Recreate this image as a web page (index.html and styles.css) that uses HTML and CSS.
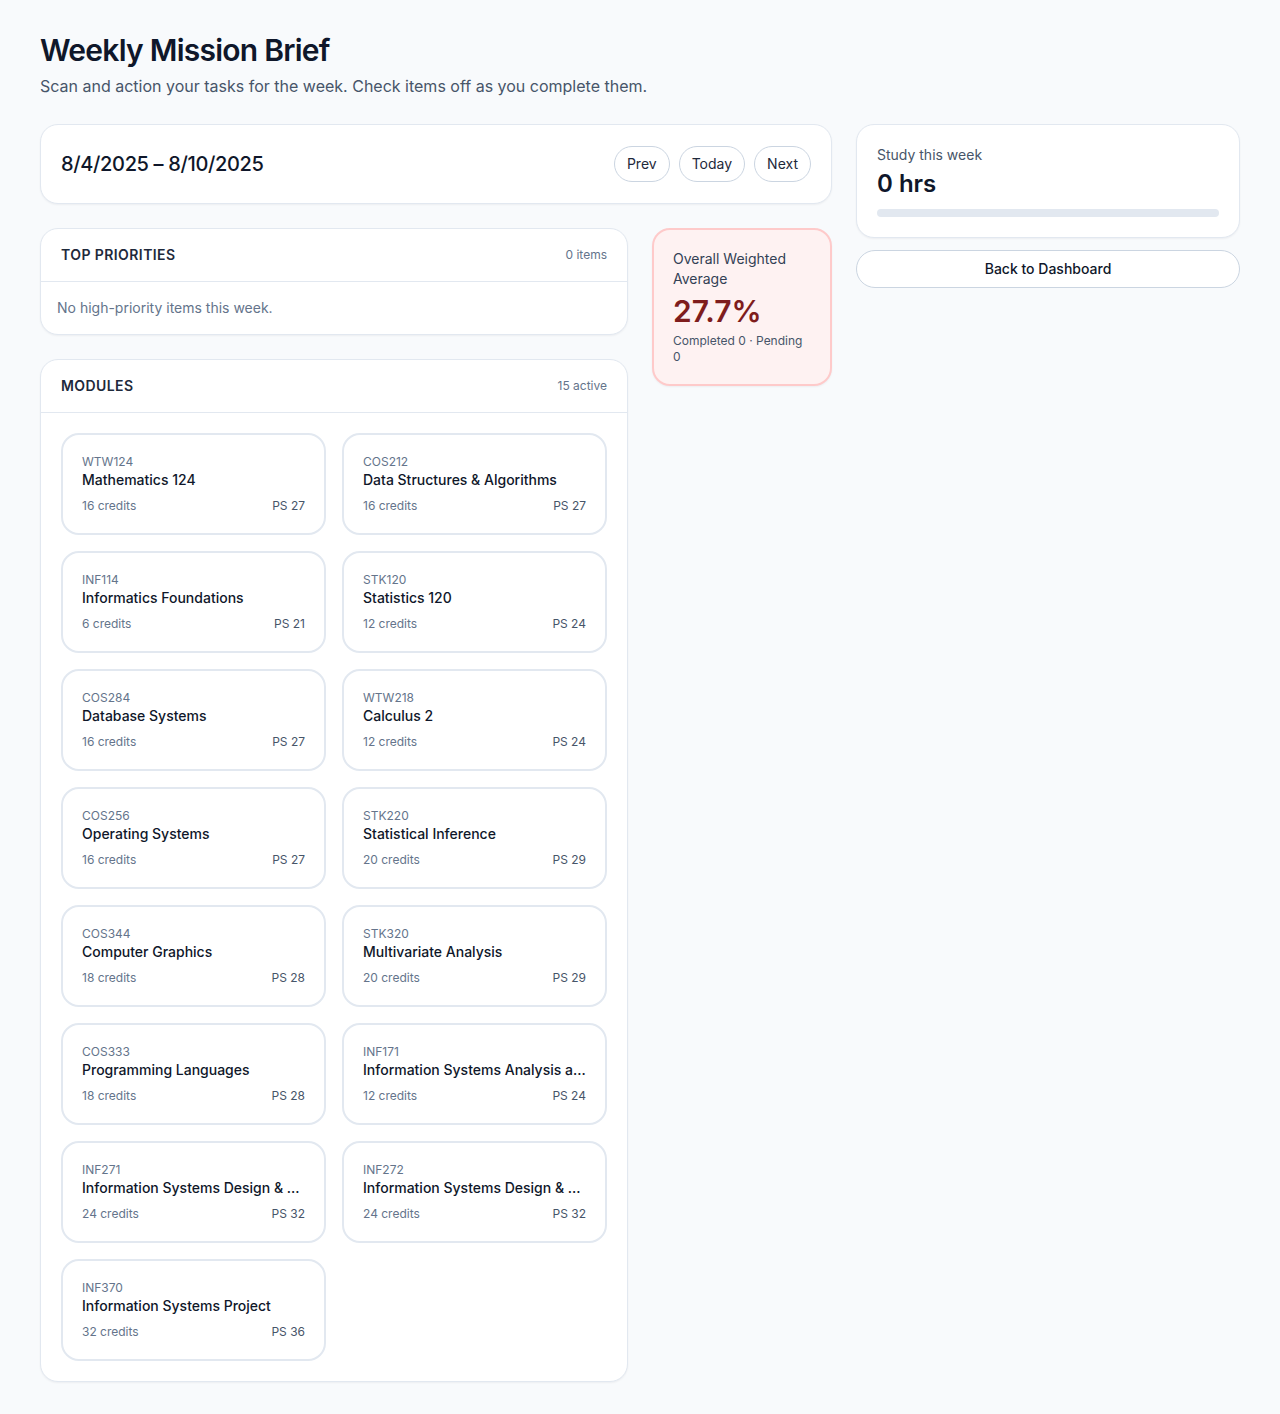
FILE: index.html
```html
<!DOCTYPE html>
<html lang="en">
<head>
<meta charset="utf-8">
<title>Weekly Mission Brief</title>
<link rel="stylesheet" href="styles.css">
</head>
<body>
<main class="page">
  <header class="page-head">
    <h1 class="page-title">Weekly Mission Brief</h1>
    <p class="page-sub">Scan and action your tasks for the week. Check items off as you complete them.</p>
  </header>

  <div class="layout">
    <div class="main-col">
      <section class="card week-card">
        <h2 class="week-range">8/4/2025 – 8/10/2025</h2>
        <div class="week-nav">
          <button class="pill-btn">Prev</button>
          <button class="pill-btn">Today</button>
          <button class="pill-btn">Next</button>
        </div>
      </section>

      <div class="content-grid">
        <div class="stack">
          <section class="card panel">
            <div class="panel-head">
              <h3 class="panel-title">Top Priorities</h3>
              <span class="panel-meta">0 items</span>
            </div>
            <p class="empty">No high-priority items this week.</p>
          </section>

          <section class="card panel">
            <div class="panel-head">
              <h3 class="panel-title">Modules</h3>
              <span class="panel-meta">15 active</span>
            </div>
            <div class="module-grid">
              <div class="module"><div class="m-code">WTW124</div><div class="m-name">Mathematics 124</div><div class="m-foot"><span>16 credits</span><span class="m-ps">PS 27</span></div></div>
              <div class="module"><div class="m-code">COS212</div><div class="m-name">Data Structures &amp; Algorithms</div><div class="m-foot"><span>16 credits</span><span class="m-ps">PS 27</span></div></div>
              <div class="module"><div class="m-code">INF114</div><div class="m-name">Informatics Foundations</div><div class="m-foot"><span>6 credits</span><span class="m-ps">PS 21</span></div></div>
              <div class="module"><div class="m-code">STK120</div><div class="m-name">Statistics 120</div><div class="m-foot"><span>12 credits</span><span class="m-ps">PS 24</span></div></div>
              <div class="module"><div class="m-code">COS284</div><div class="m-name">Database Systems</div><div class="m-foot"><span>16 credits</span><span class="m-ps">PS 27</span></div></div>
              <div class="module"><div class="m-code">WTW218</div><div class="m-name">Calculus 2</div><div class="m-foot"><span>12 credits</span><span class="m-ps">PS 24</span></div></div>
              <div class="module"><div class="m-code">COS256</div><div class="m-name">Operating Systems</div><div class="m-foot"><span>16 credits</span><span class="m-ps">PS 27</span></div></div>
              <div class="module"><div class="m-code">STK220</div><div class="m-name">Statistical Inference</div><div class="m-foot"><span>20 credits</span><span class="m-ps">PS 29</span></div></div>
              <div class="module"><div class="m-code">COS344</div><div class="m-name">Computer Graphics</div><div class="m-foot"><span>18 credits</span><span class="m-ps">PS 28</span></div></div>
              <div class="module"><div class="m-code">STK320</div><div class="m-name">Multivariate Analysis</div><div class="m-foot"><span>20 credits</span><span class="m-ps">PS 29</span></div></div>
              <div class="module"><div class="m-code">COS333</div><div class="m-name">Programming Languages</div><div class="m-foot"><span>18 credits</span><span class="m-ps">PS 28</span></div></div>
              <div class="module"><div class="m-code">INF171</div><div class="m-name">Information Systems Analysis and Design</div><div class="m-foot"><span>12 credits</span><span class="m-ps">PS 24</span></div></div>
              <div class="module"><div class="m-code">INF271</div><div class="m-name">Information Systems Design &amp; Development</div><div class="m-foot"><span>24 credits</span><span class="m-ps">PS 32</span></div></div>
              <div class="module"><div class="m-code">INF272</div><div class="m-name">Information Systems Design &amp; Development</div><div class="m-foot"><span>24 credits</span><span class="m-ps">PS 32</span></div></div>
              <div class="module"><div class="m-code">INF370</div><div class="m-name">Information Systems Project</div><div class="m-foot"><span>32 credits</span><span class="m-ps">PS 36</span></div></div>
            </div>
          </section>
        </div>

        <aside class="side-stats">
          <div class="avg-card">
            <div class="avg-label">Overall Weighted Average</div>
            <div class="avg-value">27.7%</div>
            <div class="avg-meta">Completed 0 · Pending 0</div>
          </div>
        </aside>
      </div>
    </div>

    <aside class="side-col">
      <section class="card study-card">
        <div class="study-label">Study this week</div>
        <div class="study-value">0 hrs</div>
        <div class="bar"><div class="bar-fill" style="width:0%"></div></div>
      </section>
      <button class="back-btn">Back to Dashboard</button>
    </aside>
  </div>
</main>
</body>
</html>
```

FILE: styles.css
```css
* { box-sizing: border-box; }

html, body {
  margin: 0;
  padding: 0;
  background: #f8fafc;
}

body {
  font-family: Inter, "Noto Sans", "Liberation Sans", sans-serif;
  color: #0f172a;
}

.page {
  padding: 32px 40px 32px;
}

.page-head {
  margin-bottom: 26px;
}

.page-title {
  margin: 0;
  font-size: 30px;
  line-height: 36px;
  font-weight: 600;
  letter-spacing: -0.025em;
  color: #0f172a;
}

.page-sub {
  margin: 6px 0 0;
  font-size: 16px;
  line-height: 24px;
  color: #475569;
}

.layout {
  display: grid;
  grid-template-columns: 1fr 384px;
  gap: 24px;
  align-items: start;
}

.main-col {
  display: flex;
  flex-direction: column;
  gap: 24px;
}

.card {
  background: #ffffff;
  border: 1px solid #e2e8f0;
  border-radius: 18px;
  box-shadow: 0 1px 2px rgba(15, 23, 42, 0.05);
}

.week-card {
  display: flex;
  align-items: center;
  justify-content: space-between;
  padding: 21px 20px;
}

.week-range {
  margin: 0;
  font-size: 20px;
  line-height: 28px;
  font-weight: 500;
  letter-spacing: -0.35px;
  color: #0f172a;
}

.week-nav {
  display: flex;
  gap: 9px;
}

.pill-btn {
  font-family: inherit;
  font-size: 14px;
  line-height: 20px;
  color: #1e293b;
  background: #ffffff;
  border: 1px solid #cbd5e1;
  border-radius: 18px;
  height: 36px;
  padding: 0 12px;
  cursor: pointer;
}

.content-grid {
  display: grid;
  grid-template-columns: 1fr 180px;
  gap: 24px;
  align-items: start;
}

.stack {
  display: flex;
  flex-direction: column;
  gap: 24px;
}

.panel {
  overflow: hidden;
}

.panel-head {
  display: flex;
  align-items: center;
  justify-content: space-between;
  padding: 16px 20px;
  border-bottom: 1px solid #e2e8f0;
}

.panel-title {
  margin: 0;
  font-size: 14px;
  line-height: 20px;
  font-weight: 600;
  text-transform: uppercase;
  letter-spacing: 0.03em;
  color: #1e293b;
}

.panel-meta {
  font-size: 12px;
  line-height: 16px;
  color: #64748b;
}

.empty {
  margin: 0;
  padding: 16px;
  font-size: 14px;
  line-height: 20px;
  color: #64748b;
}

.module-grid {
  display: grid;
  grid-template-columns: 1fr 1fr;
  gap: 16px;
  padding: 20px;
}

.module {
  min-width: 0;
  border: 2px solid #e2e8f0;
  border-radius: 18px;
  padding: 19px 19px;
  background: #ffffff;
}

.m-code {
  font-size: 12px;
  line-height: 16px;
  color: #64748b;
}

.m-name {
  font-size: 14px;
  line-height: 20px;
  font-weight: 500;
  color: #0f172a;
  white-space: nowrap;
  overflow: hidden;
  text-overflow: ellipsis;
}

.m-foot {
  display: flex;
  justify-content: space-between;
  margin-top: 8px;
  font-size: 12px;
  line-height: 16px;
  color: #64748b;
}

.m-ps {
  color: #475569;
}

.avg-card {
  background: #fef2f2;
  border: 2px solid #fecaca;
  border-radius: 18px;
  padding: 19px 19px;
  box-shadow: 0 1px 2px rgba(15, 23, 42, 0.05);
}

.avg-label {
  font-size: 14px;
  line-height: 20px;
  color: #334155;
}

.avg-value {
  margin-top: 4px;
  font-size: 30px;
  line-height: 36px;
  font-weight: 600;
  color: #7f1d1d;
}

.avg-meta {
  margin-top: 4px;
  font-size: 12px;
  line-height: 16px;
  color: #475569;
}

.side-col {
  display: flex;
  flex-direction: column;
  gap: 12px;
}

.study-card {
  padding: 20px;
}

.study-label {
  font-size: 14px;
  line-height: 20px;
  color: #475569;
}

.study-value {
  margin-top: 3px;
  font-size: 24px;
  line-height: 32px;
  font-weight: 600;
  color: #0f172a;
}

.bar {
  margin-top: 9px;
  height: 8px;
  border-radius: 4px;
  background: #e2e8f0;
  overflow: hidden;
}

.bar-fill {
  height: 100%;
  background: #0f172a;
}

.back-btn {
  font-family: inherit;
  font-size: 14px;
  line-height: 20px;
  font-weight: 500;
  color: #0f172a;
  background: #ffffff;
  border: 1px solid #cbd5e1;
  border-radius: 19px;
  height: 38px;
  width: 100%;
  cursor: pointer;
}
```
